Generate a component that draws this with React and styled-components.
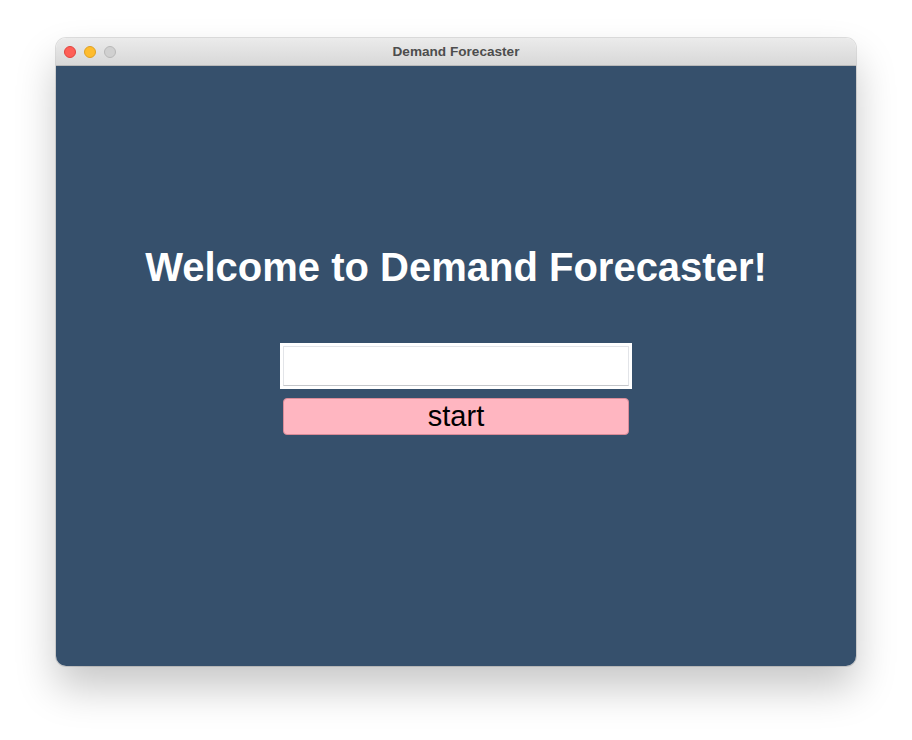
import styled, { createGlobalStyle } from "styled-components";

const Global = createGlobalStyle`
  html, body {
    margin: 0;
    padding: 0;
    background: #ffffff;
    font-family: "Liberation Sans", Arial, sans-serif;
  }
`;

const Desktop = styled.div`
  width: 912px;
  height: 740px;
  padding: 38px 56px 0;
  box-sizing: border-box;
`;

const Window = styled.div`
  width: 800px;
  height: 628px;
  border-radius: 10px;
  overflow: hidden;
  box-shadow: 0 22px 40px rgba(0, 0, 0, 0.22), 0 0 0 1px rgba(0, 0, 0, 0.12);
  display: flex;
  flex-direction: column;
`;

const TitleBar = styled.div`
  height: 28px;
  flex: none;
  background: linear-gradient(#ebebeb, #d8d8d8);
  border-bottom: 1px solid #b9b9b9;
  box-sizing: border-box;
  display: flex;
  align-items: center;
  position: relative;
  padding-left: 8px;
  gap: 8px;
`;

const Light = styled.span`
  width: 12px;
  height: 12px;
  border-radius: 50%;
  background: ${(p) => p.$color};
  border: 1px solid ${(p) => p.$edge};
  box-sizing: border-box;
`;

const Title = styled.div`
  position: absolute;
  left: 0;
  right: 0;
  text-align: center;
  font-size: 13.6px;
  font-weight: bold;
  color: #4d4d4d;
  pointer-events: none;
`;

const Content = styled.div`
  flex: 1;
  background: #36506c;
  display: flex;
  flex-direction: column;
  align-items: center;
  padding-top: 178px;
`;

const Heading = styled.h1`
  margin: 0;
  color: #ffffff;
  font-size: 40px;
  font-weight: bold;
  line-height: 46px;
`;

const FieldFrame = styled.div`
  margin-top: 53px;
  width: 352px;
  height: 46px;
  box-sizing: border-box;
  padding: 3px;
  background: #ffffff;
`;

const Field = styled.input`
  display: block;
  width: 100%;
  height: 100%;
  box-sizing: border-box;
  border: 1px solid #e2e4e8;
  border-bottom-color: #c4c6ca;
  outline: none;
  background: #ffffff;
  font-size: 16px;
  padding: 0 6px;
`;

const StartButton = styled.button`
  margin-top: 9px;
  width: 346px;
  height: 37px;
  box-sizing: border-box;
  background: #ffb6c1;
  border: 1px solid #d98b98;
  border-radius: 4px;
  font-family: "Liberation Sans", Arial, sans-serif;
  font-size: 29px;
  color: #000000;
  padding: 0;
  line-height: 33px;
`;

export default function App() {
  return (
    <>
      <Global />
      <Desktop>
        <Window>
          <TitleBar>
            <Light $color="#fe5f57" $edge="#e0443e" />
            <Light $color="#febc2e" $edge="#dea123" />
            <Light $color="#d0d0d0" $edge="#b8b8b8" />
            <Title>Demand Forecaster</Title>
          </TitleBar>
          <Content>
            <Heading>Welcome to Demand Forecaster!</Heading>
            <FieldFrame>
              <Field type="text" />
            </FieldFrame>
            <StartButton>start</StartButton>
          </Content>
        </Window>
      </Desktop>
    </>
  );
}
